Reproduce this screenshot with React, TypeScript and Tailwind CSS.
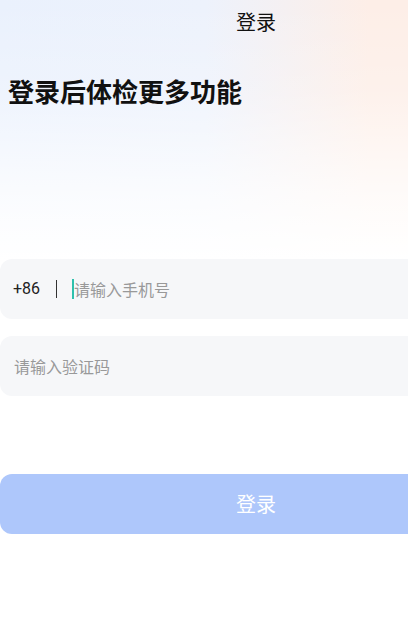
import React from "react";

export default function App() {
  return (
    <div className="w-[408px] h-[633px] overflow-hidden bg-white font-['Noto_Sans_CJK_SC','Noto_Sans',sans-serif]">
      <div className="w-[512px]">
        <div className="h-[259px] bg-[linear-gradient(to_bottom,rgba(255,255,255,0)_0%,rgba(255,255,255,0.2)_35%,rgba(255,255,255,0.75)_75%,#ffffff_100%),linear-gradient(to_right,#eaf1fd_0%,#edf2fc_40%,#fdeee7_72%,#fdeee7_100%)]">
          <div className="h-[44px] flex items-center justify-center text-[20px] text-[#111]">登录</div>
          <h1 className="pl-2 pt-[25px] text-[26px] leading-[44px] font-bold text-[#111]">登录后体检更多功能</h1>
        </div>
        <div className="flex flex-col gap-[17px]">
          <div className="h-[60px] rounded-xl bg-[#f6f7f9] flex items-center pl-[13px]">
            <span className="text-[16px] text-[#222] font-['Roboto',sans-serif]">+86</span>
            <span className="ml-[16px] w-px h-[18px] bg-[#333]" />
            <span className="ml-[15px] w-[2px] h-[20px] bg-[#2fc1ad]" />
            <span className="text-[16px] leading-[20px] text-[#999]">请输入手机号</span>
          </div>
          <div className="h-[60px] rounded-xl bg-[#f6f7f9] flex items-center pl-[14px]">
            <span className="text-[16px] leading-[20px] text-[#999]">请输入验证码</span>
          </div>
        </div>
        <button className="mt-[78px] w-full h-[60px] rounded-xl bg-[#aec7fb] text-white text-[20px]">登录</button>
      </div>
    </div>
  );
}
